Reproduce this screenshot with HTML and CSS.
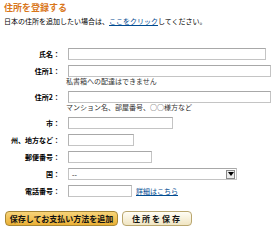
FILE: index.html
```html
<!DOCTYPE html>
<html lang="ja">
<head>
<meta charset="utf-8">
<title>住所を登録する</title>
<link rel="stylesheet" href="styles.css">
</head>
<body>
<div class="page">
  <h1 class="title">住所を登録する</h1>
  <p class="intro">日本の住所を追加したい場合は、<a href="#" class="link">ここをクリック</a>してください。</p>
  <form class="form">
    <label class="label">氏名：</label>
    <div class="field"><input class="input w-name" type="text"></div>

    <label class="label">住所1：</label>
    <div class="field">
      <input class="input w-addr" type="text">
      <span class="hint">私書箱への配達はできません</span>
    </div>

    <label class="label">住所2：</label>
    <div class="field">
      <input class="input w-addr" type="text">
      <span class="hint">マンション名、部屋番号、○○様方など</span>
    </div>

    <label class="label">市：</label>
    <div class="field"><input class="input w-city" type="text"></div>

    <label class="label">州、地方など：</label>
    <div class="field"><input class="input w-state" type="text"></div>

    <label class="label">郵便番号：</label>
    <div class="field"><input class="input w-zip" type="text"></div>

    <label class="label">国：</label>
    <div class="field">
      <div class="select">
        <span class="select-text">--</span>
        <span class="select-arrow"><svg width="6" height="4" viewBox="0 0 6 4"><path d="M0 0H6L3 4Z" fill="#000"/></svg></span>
      </div>
    </div>

    <label class="label">電話番号：</label>
    <div class="field row">
      <input class="input w-phone" type="text">
      <a href="#" class="link detail">詳細はこちら</a>
    </div>
  </form>
  <div class="actions">
    <button class="btn btn-primary" type="button">保存してお支払い方法を追加</button>
    <button class="btn btn-secondary" type="button">住所を保存</button>
  </div>
</div>
</body>
</html>
```

FILE: styles.css
```css
* { box-sizing: border-box; }
html, body { margin: 0; padding: 0; background: #fff; }
body {
  font-family: "Noto Sans CJK JP", "Noto Sans", sans-serif;
  color: #000;
}
.page {
  width: 276px;
  height: 237px;
  overflow: hidden;
  padding: 2px 0 0 0;
}
.title {
  margin: 0 0 0 4px;
  font-size: 9px;
  line-height: 11px;
  font-weight: bold;
  color: #d9761a;
}
.intro {
  margin: 3px 0 0 4px;
  font-size: 7px;
  line-height: 10px;
  color: #000;
}
.link {
  color: #004b91;
  text-decoration: underline;
}
.form {
  margin-top: 22px;
  display: grid;
  grid-template-columns: 60px 1fr;
  column-gap: 8px;
  row-gap: 5px;
  align-items: start;
}
.label {
  font-size: 7px;
  line-height: 12px;
  font-weight: bold;
  text-align: right;
  white-space: nowrap;
}
.field {
  display: flex;
  flex-direction: column;
  align-items: flex-start;
}
.field.row {
  flex-direction: row;
  align-items: center;
  gap: 4px;
}
.input {
  height: 12px;
  margin: 0;
  padding: 0 2px;
  border: 1px solid #c4c4c4;
  border-top-color: #a8a8a8;
  border-left-color: #b4b4b4;
  background: #fff;
  font-size: 7px;
  outline: none;
}
.w-name { width: 198px; }
.w-addr { width: 203px; }
.w-city { width: 105px; }
.w-state { width: 66px; }
.w-zip { width: 84px; }
.w-phone { width: 64px; }
.hint {
  margin-left: -2px;
  font-size: 7px;
  line-height: 9px;
  color: #333;
  white-space: nowrap;
}
.select {
  width: 169px;
  height: 12px;
  border: 1px solid #c4c4c4;
  border-top-color: #a8a8a8;
  display: flex;
  align-items: center;
  justify-content: space-between;
  padding: 0 1px 0 3px;
  background: #fff;
}
.select-text {
  font-size: 7px;
  line-height: 10px;
}
.select-arrow {
  width: 9px;
  height: 9px;
  border: 1px solid #8a8a8a;
  background: #ececec;
  display: flex;
  align-items: center;
  justify-content: center;
}
.select-arrow svg { display: block; }
.detail {
  font-size: 7px;
  line-height: 10px;
  white-space: nowrap;
}
.actions {
  margin: 14px 0 0 5px;
  display: flex;
  gap: 4px;
}
.btn {
  height: 15px;
  padding: 0;
  border-radius: 4px;
  font-family: "Noto Sans CJK JP", "Noto Sans", sans-serif;
  font-size: 8px;
  line-height: 13px;
  font-weight: bold;
  color: #111;
  cursor: pointer;
}
.btn-primary {
  width: 113px;
  background: linear-gradient(#f7d47a, #eab035);
  border: 1px solid #a88734;
}
.btn-secondary {
  width: 70px;
  letter-spacing: 2px;
  background: linear-gradient(#fffdf5, #f0e5c2);
  border: 1px solid #b9a66e;
}
```
